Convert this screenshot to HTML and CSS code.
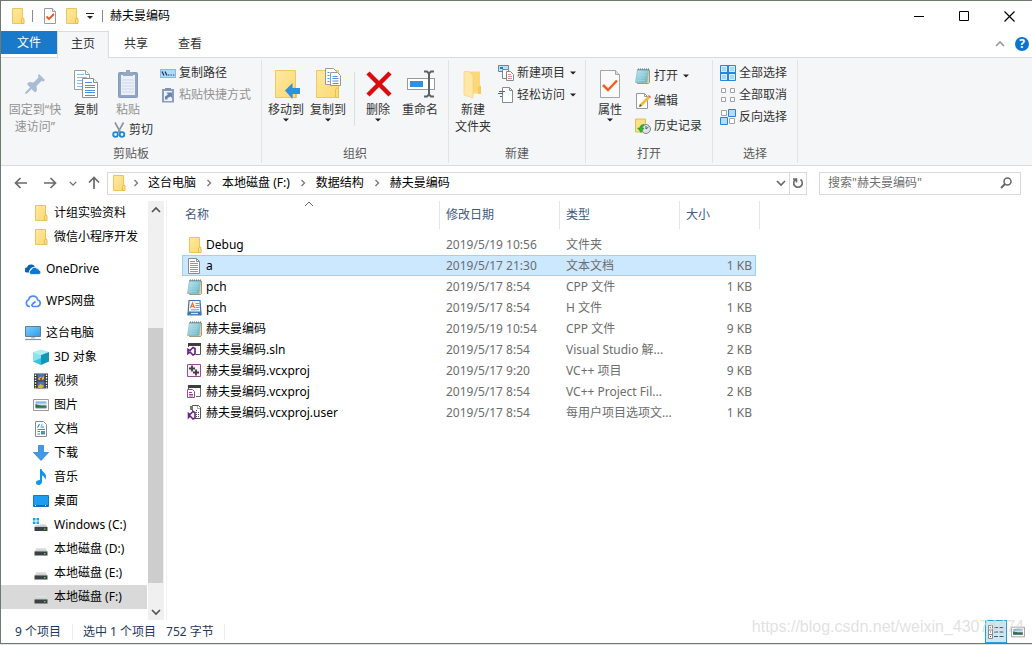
FILE: index.html
```html
<!DOCTYPE html>
<html lang="zh-CN">
<head>
<meta charset="utf-8">
<title>赫夫曼编码</title>
<link rel="stylesheet" href="styles.css">
</head>
<body>
<svg class="sprite" width="0" height="0" aria-hidden="true">
  <defs>
    <linearGradient id="gFolder" x1="0" y1="0" x2="1" y2="1"><stop offset="0" stop-color="#ffe9a2"/><stop offset="1" stop-color="#fbd96f"/></linearGradient>
    <linearGradient id="gNote" x1="0" y1="0" x2="1" y2="1"><stop offset="0" stop-color="#c5e9f0"/><stop offset="1" stop-color="#5fb0c4"/></linearGradient>
    <linearGradient id="gScreen" x1="0" y1="0" x2="1" y2="1"><stop offset="0" stop-color="#7fd0ff"/><stop offset="1" stop-color="#2a9be8"/></linearGradient>
    <linearGradient id="gDrive" x1="0" y1="0" x2="0" y2="1"><stop offset="0" stop-color="#e6e7e9"/><stop offset="1" stop-color="#bfc1c4"/></linearGradient>
    <linearGradient id="gSky" x1="0" y1="0" x2="0" y2="1"><stop offset="0" stop-color="#5f9fd8"/><stop offset=".5" stop-color="#e4f1f8"/><stop offset=".6" stop-color="#54785d"/><stop offset="1" stop-color="#6f93a8"/></linearGradient>
  </defs>
  <symbol id="folder" viewBox="0 0 16 16"><path d="M2.500.5h10v10l1 1v4h-11z" fill="url(#gFolder)" stroke="#ecc755"/><path d="M11.500 15.500v-4l1-1.500h1l.5 1.500v4z" fill="#fde08a" stroke="#e6bd43"/></symbol>
  <symbol id="check-doc" viewBox="0 0 16 16"><path d="M2.500.5h8l3 3v12h-11z" fill="#fff" stroke="#9a9a9a"/><path d="M10.500.5v3h3" fill="#eee" stroke="#9a9a9a"/><path d="M4.500 8.500l2.500 2.500 5-5" fill="none" stroke="#f0541e" stroke-width="1.800"/></symbol>
  <symbol id="check-big" viewBox="0 0 24 30"><path d="M2.500 1.500h15l4 4v23h-19z" fill="#fafafa" stroke="#a5a5a5"/><path d="M17.500 1.500v4h4" fill="#ddd" stroke="#a5a5a5"/><path d="M5 16l5 5 9-9.500" fill="none" stroke="#f4601f" stroke-width="2.500"/></symbol>
  <symbol id="pin" viewBox="0 0 24 24"><path d="M16 2l6 6-1.500 1.500-2-.5-5 5 .5 4.500-2 2-3.500-3.500-4.500 4.500-2 .5.5-2 4.500-4.500L4 12l2-2 4.500.5 5-5-.5-2z" fill="#a9bcd3"/></symbol>
  <symbol id="copy" viewBox="0 0 26 30"><g fill="#fff" stroke="#9c9c9c"><path d="M1.500 1.500h11l4 4v15h-15z"/><path d="M12.500 1.500v4h4"/></g><path d="M4 5.500h7M4 8.500h10M4 11.500h10M4 14.500h10M4 17.500h10" stroke="#8ab8ec"/><g fill="#fff" stroke="#8f8f8f"><path d="M9.500 9.500h11l4 4v15h-15z"/><path d="M20.500 9.500v4h4"/></g><path d="M12 13.500h7M12 16.500h10M12 18.500h10M12 21.500h10M12 23.500h10M12 26.500h10" stroke="#4c93e8"/></symbol>
  <symbol id="paste" viewBox="0 0 22 30"><rect x="1.500" y="3.500" width="19" height="25" rx="1" fill="#8fa4c8" stroke="#8499bd"/><path d="M4 6h14v20H4z" fill="#eaf0f8"/><path d="M5 11h12M5 14h12M5 17h12M5 20h12M5 23h12" stroke="#cbd7e7"/><path d="M6 7V3h3V1h4v2h3v4z" fill="#9aa8bf"/></symbol>
  <symbol id="scissors" viewBox="0 0 14 16"><path d="M3 .5l5.500 10M11.500.5L6 10.500" stroke="#8994a0" stroke-width="1.600" fill="none"/><g fill="none" stroke="#1d87cf" stroke-width="1.800"><circle cx="3.500" cy="12.500" r="2.300"/><circle cx="10" cy="12.500" r="2.300"/></g></symbol>
  <symbol id="path" viewBox="0 0 16 16"><rect x=".5" y="4.500" width="15" height="8" fill="#aadcf7" stroke="#8cb9dc"/><path d="M2 6.500l2 4M5 6.500l2 4" stroke="#1d3a5c" stroke-width="1.300"/><path d="M8 10h1.300M10.500 10h1.300M13 10h1.300" stroke="#1d3a5c"/></symbol>
  <symbol id="shortcut" viewBox="0 0 16 16"><path d="M2 2h12v13.500H2z" fill="#8a9dc0"/><path d="M4 4h8v10H4z" fill="#eef2f9"/><path d="M5 3.500V1h6v2.500z" fill="#8292ad"/><path d="M5 12.500V9.500l3-2-1.500-2H12V11l-1.500-1.500L7.500 11v1.500z" fill="#6a82b0"/></symbol>
  <symbol id="move-to" viewBox="0 0 28 32"><path d="M3.500 2.500h20v21l1 2v4h-21z" fill="url(#gFolder)" stroke="#efc95a"/><path d="M20.500 29.500v-8l1.500-2 1.500 2v8z" fill="#fcdc80" stroke="#e9c04b"/><path d="M13 22.500l7.500-7.500v5H28v6h-7.500v5z" fill="#2f8fe0"/></symbol>
  <symbol id="copy-to" viewBox="0 0 28 32"><path d="M2.500 2.500h22v27h-22z" fill="url(#gFolder)" stroke="#efc95a"/><path d="M21.500 29.500v-8l1.500-2 1.500 2v8z" fill="#fcdc80" stroke="#e9c04b"/><g fill="#fff" stroke="#999"><path d="M11.500.5h8l3 3v13h-11z"/><path d="M16.500 4.500h7l3 3v10h-10z"/></g><path d="M13.500 4.500h2M13.500 7.500h2M13.500 10.500h2M13.500 13.500h2M18.500 8.500h5M18.500 10.500h6M18.500 13h6M18.500 15.500h6" stroke="#4c93e8"/></symbol>
  <symbol id="delete" viewBox="0 0 28 28"><path d="M4 3l22 22M26 3L4 25" stroke="#d90b0f" stroke-width="4.500"/></symbol>
  <symbol id="rename" viewBox="0 0 30 30"><rect x="2.500" y="9.500" width="27" height="11" fill="#fff" stroke="#999"/><path d="M5 12h13v6H5z" fill="#2f8fe3"/><path d="M19 2.500h3l2 2 2-2h3M19 27.500h3l2-2 2 2h3M24 4v22" fill="none" stroke="#5c6368" stroke-width="2"/></symbol>
  <symbol id="new-folder" viewBox="0 0 24 30"><path d="M8 2.500h11v22H8z" fill="#fbd878"/><path d="M3 2.500h5l4 4V29l-9-3z" fill="#ffe7a6" stroke="#f2ce72" stroke-width=".6"/><path d="M17 25V18l3-1.500V25z" fill="#f6ca5b"/></symbol>
  <symbol id="new-item" viewBox="0 0 16 16"><path d="M.5.5h10v6H.5z" fill="#bde1f6" stroke="#5d8aaa"/><path d="M2 2h3v2H2z" fill="#287fba"/><path d="M4.500 4.500h6v9h-6z" fill="#fff" stroke="#888"/><path d="M8.500 6.500h4l3 3v6h-7z" fill="#fff" stroke="#888"/><path d="M10 9.500h3M10 11.500h4M10 13.500h4" stroke="#e88"/></symbol>
  <symbol id="easy" viewBox="0 0 16 16"><path d="M4.500.5h7l3 3v12h-10z" fill="#fff" stroke="#8a8a8a"/><path d="M11.500.5v3h3" fill="none" stroke="#8a8a8a"/><path d="M1 4.500h6M0 6.500h5M2 9.500h2" stroke="#1976c5" stroke-width="1.200"/></symbol>
  <symbol id="notepad" viewBox="0 0 16 16"><path d="M3.500 2h11v12.500l-1 1h-11z" fill="#e0d4b0" stroke="#a39b78"/><path d="M2.500 1.500h11L12 14.500H.5z" fill="url(#gNote)" stroke="#86b7c2" stroke-width=".7"/><path d="M3 5h8M2.500 7.500h8M2.500 10h8M2 12.500h8" stroke="#a5dce6" stroke-width=".6"/><path d="M3 2.500L3.500.5M5 2.500L5.500.5M7 2.500L7.500.5M9 2.500L9.500.5M11 2.500l.5-2M13 2.500l.5-2" stroke="#55777f"/></symbol>
  <symbol id="edit" viewBox="0 0 16 16"><path d="M1.500.5h8l3 3v12h-11z" fill="#fff" stroke="#999"/><path d="M9.500.5v3h3" fill="none" stroke="#999"/><path d="M4 14l1-3 8-8 2 2-8 8z" fill="#f2bd36"/><path d="M13 3l1-1 2 2-1 1z" fill="#dd5f50"/><path d="M4 14l1-3 2 2z" fill="#5b564d"/></symbol>
  <symbol id="history" viewBox="0 0 16 16"><path d="M.5 1h10v13H.5z" fill="#fbe088" stroke="#dec04e"/><circle cx="11" cy="11" r="4.500" fill="#dfe3e7" stroke="#7d858c"/><path d="M11 8v3l2.500-2" fill="none" stroke="#555"/><path d="M9 6.500C6 6.500 5 8 4.800 10H2.500L6 14.500 9 10H7c.2-1.500 1-2 2-2z" fill="#35b235" stroke="#1d8a22" stroke-width=".5"/></symbol>
  <symbol id="sel-all" viewBox="0 0 16 16"><path d="M.5.500h15v15H.5z" fill="#a9d7f9" stroke="#2088dc"/><path d="M8 0v16M0 8h16" stroke="#2088dc" stroke-width="2"/><path d="M1.500 1.500h5v5h-5zM9.500 1.500h5v5h-5zM1.500 9.500h5v5h-5zM9.500 9.500h5v5h-5z" fill="none" stroke="#d8eefd"/></symbol>
  <symbol id="sel-none" viewBox="0 0 16 16"><path d="M1.500 1.500h4v4h-4zM10.500 1.500h4v4h-4zM1.500 10.500h4v4h-4zM10.500 10.500h4v4h-4z" fill="#fff" stroke="#a2a2a2"/></symbol>
  <symbol id="sel-inv" viewBox="0 0 16 16"><path d="M1.500 1.500h5v5h-5zM9.500 9.500h5v5h-5z" fill="#fff" stroke="#a2a2a2"/><path d="M8.500.5h7v7h-7zM.5 8.500h7v7h-7z" fill="#b4dcfa" stroke="#2088dc"/></symbol>
  <symbol id="chev-r" viewBox="0 0 8 8"><path d="M2.500 1l3 3-3 3" fill="none" stroke="#777" stroke-width="1.300"/></symbol>
  <symbol id="chev-d" viewBox="0 0 10 8"><path d="M1 2l4 4 4-4" fill="none" stroke="currentColor" stroke-width="1.600"/></symbol>
  <symbol id="chev-u" viewBox="0 0 10 8"><path d="M1 6l4-4 4 4" fill="none" stroke="currentColor" stroke-width="1.600"/></symbol>
  <symbol id="chev-thin" viewBox="0 0 10 8"><path d="M1 6l4-4 4 4" fill="none" stroke="currentColor"/></symbol>
  <symbol id="caret" viewBox="0 0 6 4"><path d="M0 .5h6L3 3.500z" fill="#222"/></symbol>
  <symbol id="arrow-l" viewBox="0 0 14 14"><path d="M13 7H2M6.500 2L1.500 7l5 5" fill="none" stroke="currentColor" stroke-width="1.700"/></symbol>
  <symbol id="arrow-r" viewBox="0 0 14 14"><path d="M1 7h11M7.500 2l5 5-5 5" fill="none" stroke="currentColor" stroke-width="1.700"/></symbol>
  <symbol id="arrow-u" viewBox="0 0 14 14"><path d="M7 13V2M2 6.500l5-5 5 5" fill="none" stroke="currentColor" stroke-width="1.700"/></symbol>
  <symbol id="refresh" viewBox="0 0 12 12"><path d="M8.500 2.500a4.300 4.300 0 1 1-5 0M4.500 5.500V2H1" fill="none" stroke="#6a6a6a" stroke-width="1.600"/></symbol>
  <symbol id="search" viewBox="0 0 12 12"><circle cx="7.500" cy="4.500" r="3.500" fill="none" stroke="#666" stroke-width="1.500"/><path d="M5 7L1 11" stroke="#666" stroke-width="2"/></symbol>
  <symbol id="onedrive" viewBox="0 0 16 16"><path d="M1.800 11.500A2.500 2.500 0 0 1 2 6.500 4 4 0 0 1 6 3.500a4.500 4.500 0 0 1 4 2L6 7 4 10v1.500z" fill="#0a64b4"/><path d="M6.500 13.500a2.300 2.300 0 0 1-.5-4.500 3.500 3.500 0 0 1 6-1.500 3 3 0 0 1 2.500 2 2.100 2.100 0 0 1-.5 4z" fill="#0a78d4" stroke="#fff" stroke-width=".7"/></symbol>
  <symbol id="wps" viewBox="0 0 16 16"><path d="M5 13.500h-.5A3.500 3.500 0 0 1 3.500 6.800 4.700 4.700 0 0 1 12.700 7 3.300 3.300 0 0 1 12 13.500H8.500c-1.500 0-2-1.500-1-2.500L10.500 8.500" fill="none" stroke="#4b8df5" stroke-width="1.700"/></symbol>
  <symbol id="pc" viewBox="0 0 16 16"><path d="M.5 1.500h15v10H.5z" fill="url(#gScreen)" stroke="#5f7f94"/><path d="M6 12h4v1.500H6z" fill="#b8c8d2"/><path d="M0 14.500h16" stroke="#7f98a8" stroke-width="1.200"/></symbol>
  <symbol id="cube" viewBox="0 0 16 16"><path d="M0 3l8-2.500L16 3l-8 3z" fill="#b0edf4"/><path d="M0 3l8 3v10L0 12.500z" fill="#8be1ec"/><path d="M16 3L8 6v10l8-3.500z" fill="#1098ba"/><path d="M0 12.500l8-3.500v7z" fill="#3fc2d9"/></symbol>
  <symbol id="film" viewBox="0 0 16 16"><path d="M1 .5h14v15H1z" fill="#383838"/><path d="M4.500 1h7v6.500h-7zM4.500 8.500h7V15h-7z" fill="#4b74bd"/><path d="M5 5.500l2.500-2 1 1.500 2.500-2v3l-2 1H6zM5 13l2.500-2 3.500 2-2 2H5z" fill="#e4b42d"/><path d="M7 5h2v2H7z" fill="#c83a20"/><path d="M2.500 1.500v14M13.500 1.500v14" stroke="#fff" stroke-width="1.400" stroke-dasharray="1.400 1.200"/></symbol>
  <symbol id="picture" viewBox="0 0 16 16"><path d="M.5 2.500h15v11H.5z" fill="#fff" stroke="#999"/><path d="M2.500 4.500h11v7h-11z" fill="url(#gSky)"/><path d="M2.500 7l3 1 3 1 5 .5v1h-11z" fill="#3b6b56"/></symbol>
  <symbol id="docs" viewBox="0 0 16 16"><path d="M2.500.5h8l3 3v12h-11z" fill="#fff" stroke="#8a8a8a"/><path d="M4.500 6.500l2-3.500M8 4h1.500M7.500 6H11M4.500 8.500H12M4.500 10.500H7M4.500 13H7" stroke="#258ed2" stroke-width="1.200"/><path d="M8 10h4v3.500H8z" fill="#5790ae"/></symbol>
  <symbol id="download" viewBox="0 0 16 16"><path d="M5.500.5h5v7h5L8 15.500.5 7.500h5z" fill="#3f9bea" stroke="#2478c8" stroke-width=".7"/></symbol>
  <symbol id="music" viewBox="0 0 16 16"><path d="M7 0h1.500c.5 3 4.500 4 4.500 7.500 0 1.500-.5 2.500-1 3.500 0-3-1.500-4-3-4.500v6.500c0 1.500-1.500 3-3.500 3S3 15 3 13.500 4.500 11 7 11z" fill="#0f94e8"/></symbol>
  <symbol id="desktop" viewBox="0 0 16 16"><path d="M.5 2.500h15v11H.5z" fill="#1c9df2" stroke="#1678c4"/><path d="M1 12h14v1.500H1z" fill="#116bb0"/><path d="M2 12.500h2M12 12.500h2" stroke="#fff" stroke-dasharray="1 1"/></symbol>
  <symbol id="drive" viewBox="0 0 16 16"><path d="M3.500 7h9l2 4h-13z" fill="url(#gDrive)"/><path d="M1.500 10.500h13v4h-13z" fill="#3c4144"/><path d="M11 12h1.500v1.300H11z" fill="#3fe04d"/></symbol>
  <symbol id="win-drive" viewBox="0 0 16 16"><path d="M0 1h2.500v2.500H0zM3.500 1H6v2.500H3.500zM0 4.500h2.500V7H0zM3.500 4.500H6V7H3.500z" fill="#12a8e8"/><path d="M6.500 7h6l2 3h-13l1-2h4z" fill="url(#gDrive)"/><path d="M1.500 10h13v4h-13z" fill="#3c4144"/><path d="M11 11.500h1.500v1.300H11z" fill="#3fe04d"/></symbol>
  <symbol id="txt" viewBox="0 0 16 16"><path d="M1.500.5h8l3 3v12h-11z" fill="#fff" stroke="#8b8b8b"/><path d="M9.500.5v3h3" fill="none" stroke="#8b8b8b"/><path d="M3 3.500h5M3 5.500h8M3 7.500h8M3 9.500h8M3 11.500h8M3 13.500h8" stroke="#999"/></symbol>
  <symbol id="hfile" viewBox="0 0 16 16"><path d="M2 .5h11l1 14H1z" fill="#f4f8fd" stroke="#3f74ac" stroke-width="1.200"/><path d="M1 11.500h13l.5 4H.5z" fill="#3f79b6"/><path d="M4 13.500h7" stroke="#d8e8f5" stroke-width="1.200"/><path d="M3.500 8L5.500 3l2 5M4 6.500h3" fill="none" stroke="#e7702a" stroke-width="1.200"/><path d="M8.500 3.500h4M8.500 5.500h4M8.500 7.500h4M4 9.800h8" stroke="#6c9fd0"/></symbol>
  <symbol id="sln" viewBox="0 0 16 16"><path d="M1.500 3.500h12v9h-12z" fill="#fff" stroke="#555"/><path d="M1 1h13v3H1z" fill="#3e3e3e"/><path d="M0 5h9v9H0z" fill="#fff"/><path d="M1 7.500v4l2-1.500 3 3 2-1V6.500l-2-1-3 3z" fill="none" stroke="#6b2585" stroke-width="1.700"/></symbol>
  <symbol id="proj" viewBox="0 0 16 16"><path d="M.5 1.500h13v12H.5z" fill="#f4f0f4" stroke="#9a4b98"/><path d="M2 5.500h6M5 2.500v6M6 9.500h6M9 6.500v6" stroke="#3d3d3d" stroke-width="1.800"/></symbol>
  <symbol id="filters" viewBox="0 0 16 16"><path d="M1.500 3.500h12v9h-12z" fill="#fff" stroke="#666"/><path d="M1 1h13v3H1z" fill="#3e3e3e"/><path d="M0 5h9v10H0z" fill="#fff"/><path d="M.5 5.500h5l2 2v6h-7z" fill="#fff" stroke="#9a4b98"/><path d="M2 8.500h3M2 10.500h4M2 12h4" stroke="#9a4b98"/></symbol>
  <symbol id="user" viewBox="0 0 16 16"><path d="M5.500.5h6l2 2v11h-8z" fill="#fff" stroke="#555"/><path d="M10.500.5v3h3M9.500 5v7M11.500 7v5" fill="none" stroke="#555" stroke-dasharray="1 1"/><path d="M3 1h3v4H3z" fill="#777"/><path d="M1 6h7v9H1z" fill="#fff"/><path d="M1.500 8.500v4L3 11l3 3 2-1V7.500l-2-1-3 3z" fill="none" stroke="#6b2585" stroke-width="1.600"/></symbol>
</svg>

<main class="window">
  <header class="titlebar">
    <svg class="ico"><use href="#folder"/></svg>
    <span class="tick-line"></span>
    <button class="quick" aria-label="属性"><svg class="ico"><use href="#check-doc"/></svg></button>
    <button class="quick" aria-label="新建文件夹"><svg class="ico"><use href="#folder"/></svg></button>
    <button class="quick narrow" aria-label="自定义快速访问工具栏"><svg width="8" height="8" viewBox="0 0 8 8"><path d="M0 1.500h8" stroke="#222"/><path d="M1 4h6L4 7z" fill="#222"/></svg></button>
    <span class="tick-line"></span>
    <h1 class="title">赫夫曼编码</h1>
    <div class="controls">
      <button aria-label="最小化"><svg width="11" height="11"><path d="M0 5.500h10" stroke="#000"/></svg></button>
      <button aria-label="最大化"><svg width="11" height="11"><path d="M.5.500h9v9h-9z" fill="none" stroke="#000"/></svg></button>
      <button aria-label="关闭"><svg width="11" height="11"><path d="M.5.500l10 10M10.500.5l-10 10" stroke="#000" stroke-width="1.200"/></svg></button>
    </div>
  </header>

  <nav class="tabs">
    <button class="tab file">文件</button>
    <button class="tab active">主页</button>
    <button class="tab">共享</button>
    <button class="tab">查看</button>
    <div class="tab-tools">
      <button aria-label="最小化功能区"><svg class="collapse" width="10" height="8"><use href="#chev-u"/></svg></button>
      <button class="help" aria-label="帮助">?</button>
    </div>
  </nav>

  <section class="ribbon">
    <div class="group clipboard">
      <div class="tools">
        <button class="big pin off"><span class="pic"><svg width="24" height="24"><use href="#pin"/></svg></span>固定到“快<br>速访问”</button>
        <button class="big"><span class="pic"><svg width="26" height="30"><use href="#copy"/></svg></span>复制</button>
        <div class="paste-col">
          <button class="big off"><span class="pic"><svg width="22" height="30"><use href="#paste"/></svg></span>粘贴</button>
          <button class="small cut"><svg width="14" height="16"><use href="#scissors"/></svg>剪切</button>
        </div>
        <div class="stack">
          <button class="small"><svg class="ico"><use href="#path"/></svg>复制路径</button>
          <button class="small off"><svg class="ico"><use href="#shortcut"/></svg>粘贴快捷方式</button>
        </div>
      </div>
      <div class="group-name">剪贴板</div>
    </div>
    <div class="group organize">
      <div class="tools">
        <button class="big"><span class="pic"><svg width="28" height="32"><use href="#move-to"/></svg></span>移动到<svg class="drop"><use href="#caret"/></svg></button>
        <button class="big"><span class="pic"><svg width="28" height="32"><use href="#copy-to"/></svg></span>复制到<svg class="drop"><use href="#caret"/></svg></button>
        <span class="inner-line"></span>
        <button class="big"><span class="pic"><svg width="28" height="28"><use href="#delete"/></svg></span>删除<svg class="drop"><use href="#caret"/></svg></button>
        <button class="big"><span class="pic"><svg width="30" height="30"><use href="#rename"/></svg></span>重命名</button>
      </div>
      <div class="group-name">组织</div>
    </div>
    <div class="group create">
      <div class="tools">
        <button class="big"><span class="pic"><svg width="24" height="30"><use href="#new-folder"/></svg></span>新建<br>文件夹</button>
        <div class="stack">
          <button class="small"><svg class="ico"><use href="#new-item"/></svg>新建项目<svg class="drop"><use href="#caret"/></svg></button>
          <button class="small"><svg class="ico"><use href="#easy"/></svg>轻松访问<svg class="drop"><use href="#caret"/></svg></button>
        </div>
      </div>
      <div class="group-name">新建</div>
    </div>
    <div class="group open">
      <div class="tools">
        <button class="big"><span class="pic"><svg width="24" height="30"><use href="#check-big"/></svg></span>属性<svg class="drop"><use href="#caret"/></svg></button>
        <div class="stack loose">
          <button class="small"><svg class="ico"><use href="#notepad"/></svg>打开<svg class="drop"><use href="#caret"/></svg></button>
          <button class="small"><svg class="ico"><use href="#edit"/></svg>编辑</button>
          <button class="small"><svg class="ico"><use href="#history"/></svg>历史记录</button>
        </div>
      </div>
      <div class="group-name">打开</div>
    </div>
    <div class="group select">
      <div class="tools">
        <div class="stack">
          <button class="small"><svg class="ico"><use href="#sel-all"/></svg>全部选择</button>
          <button class="small"><svg class="ico"><use href="#sel-none"/></svg>全部取消</button>
          <button class="small"><svg class="ico"><use href="#sel-inv"/></svg>反向选择</button>
        </div>
      </div>
      <div class="group-name">选择</div>
    </div>
  </section>

  <section class="location">
    <div class="history">
      <button class="arrow" aria-label="后退"><svg width="14" height="14"><use href="#arrow-l"/></svg></button>
      <button class="arrow" aria-label="前进"><svg width="14" height="14"><use href="#arrow-r"/></svg></button>
      <button class="recent" aria-label="最近浏览的位置"><svg width="8" height="7"><use href="#chev-d"/></svg></button>
      <button class="up" aria-label="上移"><svg width="14" height="14"><use href="#arrow-u"/></svg></button>
    </div>
    <div class="address">
      <svg class="ico"><use href="#folder"/></svg>
      <svg class="sep"><use href="#chev-r"/></svg><a href="#">这台电脑</a>
      <svg class="sep"><use href="#chev-r"/></svg><a href="#">本地磁盘 (F:)</a>
      <svg class="sep"><use href="#chev-r"/></svg><a href="#">数据结构</a>
      <svg class="sep"><use href="#chev-r"/></svg><a href="#">赫夫曼编码</a>
      <button class="expand" aria-label="以前的位置"><svg width="10" height="8"><use href="#chev-d"/></svg></button>
      <button class="reload" aria-label="刷新"><svg width="12" height="12"><use href="#refresh"/></svg></button>
    </div>
    <div class="search">
      <input type="text" aria-label="搜索" placeholder='搜索"赫夫曼编码"'>
      <svg width="12" height="12"><use href="#search"/></svg>
    </div>
  </section>

  <section class="content">
    <nav class="tree">
      <a class="node" href="#"><svg class="ico"><use href="#folder"/></svg>计组实验资料</a>
      <a class="node" href="#"><svg class="ico"><use href="#folder"/></svg>微信小程序开发</a>
      <a class="node root" href="#"><svg class="ico"><use href="#onedrive"/></svg>OneDrive</a>
      <a class="node root" href="#"><svg class="ico"><use href="#wps"/></svg>WPS网盘</a>
      <a class="node root" href="#"><svg class="ico"><use href="#pc"/></svg>这台电脑</a>
      <a class="node" href="#"><svg class="ico"><use href="#cube"/></svg>3D 对象</a>
      <a class="node" href="#"><svg class="ico"><use href="#film"/></svg>视频</a>
      <a class="node" href="#"><svg class="ico"><use href="#picture"/></svg>图片</a>
      <a class="node" href="#"><svg class="ico"><use href="#docs"/></svg>文档</a>
      <a class="node" href="#"><svg class="ico"><use href="#download"/></svg>下载</a>
      <a class="node" href="#"><svg class="ico"><use href="#music"/></svg>音乐</a>
      <a class="node" href="#"><svg class="ico"><use href="#desktop"/></svg>桌面</a>
      <a class="node" href="#"><svg class="ico"><use href="#win-drive"/></svg>Windows (C:)</a>
      <a class="node" href="#"><svg class="ico"><use href="#drive"/></svg>本地磁盘 (D:)</a>
      <a class="node" href="#"><svg class="ico"><use href="#drive"/></svg>本地磁盘 (E:)</a>
      <a class="node current" href="#"><svg class="ico"><use href="#drive"/></svg>本地磁盘 (F:)</a>
    </nav>
    <div class="scrollbar">
      <button aria-label="向上滚动"><svg width="10" height="8"><use href="#chev-u"/></svg></button>
      <div class="track"><div class="thumb"></div></div>
      <button aria-label="向下滚动"><svg width="10" height="8"><use href="#chev-d"/></svg></button>
    </div>
    <div class="files">
      <table>
        <colgroup><col class="c-name"><col class="c-mid"><col class="c-mid"><col class="c-size"></colgroup>
        <thead>
          <tr>
            <th class="name"><div class="head">名称<svg class="sort"><use href="#chev-thin"/></svg></div></th>
            <th><div class="head">修改日期</div></th>
            <th><div class="head">类型</div></th>
            <th><div class="head last">大小</div></th>
          </tr>
        </thead>
        <tbody>
          <tr><td class="name"><span class="file-name"><svg class="ico"><use href="#folder"/></svg>Debug</span></td><td>2019/5/19 10:56</td><td>文件夹</td><td class="size"></td></tr>
          <tr class="selected"><td class="name"><span class="file-name"><svg class="ico"><use href="#txt"/></svg>a</span></td><td>2019/5/17 21:30</td><td>文本文档</td><td class="size">1 KB</td></tr>
          <tr><td class="name"><span class="file-name"><svg class="ico"><use href="#notepad"/></svg>pch</span></td><td>2019/5/17 8:54</td><td>CPP 文件</td><td class="size">1 KB</td></tr>
          <tr><td class="name"><span class="file-name"><svg class="ico"><use href="#hfile"/></svg>pch</span></td><td>2019/5/17 8:54</td><td>H 文件</td><td class="size">1 KB</td></tr>
          <tr><td class="name"><span class="file-name"><svg class="ico"><use href="#notepad"/></svg>赫夫曼编码</span></td><td>2019/5/19 10:54</td><td>CPP 文件</td><td class="size">9 KB</td></tr>
          <tr><td class="name"><span class="file-name"><svg class="ico"><use href="#sln"/></svg>赫夫曼编码.sln</span></td><td>2019/5/17 8:54</td><td>Visual Studio 解...</td><td class="size">2 KB</td></tr>
          <tr><td class="name"><span class="file-name"><svg class="ico"><use href="#proj"/></svg>赫夫曼编码.vcxproj</span></td><td>2019/5/17 9:20</td><td>VC++ 项目</td><td class="size">9 KB</td></tr>
          <tr><td class="name"><span class="file-name"><svg class="ico"><use href="#filters"/></svg>赫夫曼编码.vcxproj</span></td><td>2019/5/17 8:54</td><td>VC++ Project Fil...</td><td class="size">2 KB</td></tr>
          <tr><td class="name"><span class="file-name"><svg class="ico"><use href="#user"/></svg>赫夫曼编码.vcxproj.user</span></td><td>2019/5/17 8:54</td><td>每用户项目选项文...</td><td class="size">1 KB</td></tr>
        </tbody>
      </table>
    </div>
  </section>

  <footer class="status">
    <span class="count">9 个项目</span>
    <span class="chosen">选中 1 个项目</span>
    <span class="bytes">752 字节</span>
    <div class="views">
      <button class="view on" aria-label="详细信息"><svg width="16" height="16" viewBox="0 0 16 16"><path d="M.5 1.500h4v13h-4zM.5 6h4M.5 10.500h4" fill="#fff" stroke="#8a8a8a"/><path d="M2 3.500h1M2 8h1M2 12.500h1" stroke="#c22"/><path d="M6 3.500h4M11.500 3.500h4M6 8h4M11.500 8h4M6 12.500h4M11.500 12.500h4" stroke="#555"/></svg></button>
      <button class="view" aria-label="大缩略图"><svg width="14" height="14" viewBox="0 0 16 16"><use href="#picture"/></svg></button>
    </div>
    <div class="watermark">https://blog.csdn.net/weixin_43074474</div>
  </footer>
</main>
</body>
</html>
```
FILE: styles.css
```css
* { box-sizing: border-box; }
body {
  margin: 0;
  min-height: 100vh;
  padding-bottom: 1px;
  display: flex;
  background: #dfe3e4;
  color: #000;
  font: 12px/16px "Noto Sans", "Noto Sans CJK SC", sans-serif;
}
svg { flex: none; display: block; }
.sprite { position: absolute; }
.ico { width: 16px; height: 16px; }
button { margin: 0; padding: 0; border: 0; background: none; color: inherit; font: inherit; display: flex; align-items: center; justify-content: center; }
a { color: inherit; text-decoration: none; }

.window {
  flex: 1;
  min-width: 0;
  display: flex;
  flex-direction: column;
  background: #fff;
  border: 1px solid #6d7a6e;
  border-right: 0;
}

.titlebar { display: flex; align-items: center; height: 30px; padding-left: 9px; }
.tick-line { width: 1px; height: 12px; background: #8c8c8c; }
.titlebar > .ico { margin-right: 6px; }
.quick { width: 22px; margin-left: 6px; }
.quick + .quick { margin-left: 0; }
.quick.narrow { width: 14px; margin-right: 5px; }
.title { margin: 0 0 0 7px; font-size: 12px; font-weight: 400; }
.controls { display: flex; margin-left: auto; }
.controls button { width: 45px; height: 29px; }

.tabs { display: flex; height: 27px; border-bottom: 1px solid #dadbdc; }
.tab { width: 54px; height: 26px; color: #333; }
.tab.file { width: 56px; height: 23px; background: #1979ca; color: #fff; }
.tab.active { width: 52px; height: 27px; padding-bottom: 2px; background: #f5f6f7; border: 1px solid #dadbdc; border-bottom: 0; }
.tab-tools { display: flex; align-items: center; gap: 10px; margin-left: auto; padding-right: 3px; }
.collapse { color: #999; }
.help { width: 14px; height: 14px; border-radius: 50%; background: #0b74cf; color: #fff; font-weight: 700; }

.ribbon { display: flex; height: 108px; padding-top: 2px; background: #f5f6f7; border-bottom: 1px solid #dadbdc; color: #333; }
.group { height: 103px; border-right: 1px solid #e2e3e4; display: flex; flex-direction: column; }
.tools { flex: 1; display: flex; padding-top: 2px; }
.group-name { height: 17px; text-align: center; color: #5a5a5a; }
.clipboard { width: 261px; }
.clipboard .tools { padding-left: 4px; }
.organize { width: 187px; }
.organize .tools { padding-left: 3px; }
.create { width: 137px; }
.create .tools { padding-left: 0; }
.open { width: 127px; }
.open .tools { padding-left: 2px; }
.select { width: 85px; }
.select .tools { padding-left: 7px; }
.big { width: 42px; padding-top: 5px; flex-direction: column; justify-content: flex-start; line-height: 17px; }
.big.pin { width: 60px; }
.pic { height: 34px; display: flex; align-items: center; }
.drop { width: 6px; height: 4px; }
.off { color: #929292; }
.stack { display: flex; flex-direction: column; }
.clipboard .stack { margin-left: 7px; }
.small { justify-content: flex-start; gap: 3px; height: 22px; line-height: 16px; white-space: nowrap; }
.small .drop { margin-left: 2px; }
.stack.loose { padding-top: 1px; }
.stack.loose .small { height: 25px; }
.create .big { width: 48px; }
.create .stack { margin-left: 1px; }
.open .big { width: 44px; margin-right: 3px; }
.small.cut { height: 20px; margin: 2px 0 0 5px; }
.inner-line { width: 1px; height: 54px; margin: 10px 2px 0 5px; background: #dcdddf; }

.location { display: flex; align-items: center; height: 34px; padding-right: 11px; }
.history { display: flex; align-items: center; width: 106px; color: #6a6a6a; padding-left: 5px; }
.arrow { width: 29px; }
.recent { width: 18px; }
.up { width: 24px; }
.address { flex: 1; min-width: 0; display: flex; align-items: center; height: 23px; border: 1px solid #d9d9d9; padding-left: 3px; }
.sep { width: 8px; height: 8px; margin: 0 9px; }
.address .ico + .sep { margin: 0 8px 0 5px; }
.expand { width: 16px; margin-left: auto; color: #666; }
.reload { width: 17px; height: 21px; border-left: 1px solid #d9d9d9; }
.search { display: flex; align-items: center; width: 202px; height: 23px; margin-left: 12px; padding: 0 8px; border: 1px solid #d9d9d9; }
.search input { flex: 1; min-width: 0; padding: 0; border: 0; outline: 0; background: none; font: inherit; }
.search input::placeholder { color: #707070; opacity: 1; }

.content { flex: 1; display: flex; }
.tree { width: 146px; padding-top: 1px; }
.node { display: flex; align-items: center; gap: 5px; height: 24px; padding-left: 32px; white-space: nowrap; }
.node.root { margin-top: 8px; padding-left: 24px; }
.node.current { background: #d9d9d9; }
.scrollbar { width: 16px; margin: 1px 2px 0 1px; display: flex; flex-direction: column; background: #f0f0f0; color: #505050; }
.scrollbar button { height: 17px; width: 16px; }
.track { flex: 1; display: flex; flex-direction: column; justify-content: flex-end; padding-bottom: 20px; }
.thumb { height: 70%; width: 15px; background: #cdcdcd; }
.files { flex: 1; padding: 1px 0 0 15px; border-left: 1px solid #f2f2f2; }
table { width: 574px; table-layout: fixed; border-collapse: separate; border-spacing: 0; }
.c-name { width: 258px; }
.c-mid { width: 120px; }
.c-size { width: 76px; }
th { padding: 0 0 5px; font-weight: 400; text-align: left; color: #44597c; }
.head { position: relative; height: 28px; padding: 6px 0 0 6px; border-right: 1px solid #e5e5e5; }
.name .head { padding-left: 3px; }
.head.last { width: 80px; }
.sort { position: absolute; left: 122px; top: -1px; width: 10px; height: 8px; color: #666; }
td { height: 21px; padding: 0 0 0 6px; white-space: nowrap; color: #6d6d6d; border: 1px solid transparent; border-width: 1px 0; line-height: 16px; }
td.name { padding-left: 5px; color: #000; }
td.size { padding: 0 4px; text-align: right; }
.file-name { display: flex; align-items: center; gap: 3px; }
.selected td { background: #cce8ff; border-color: #99d1ff; }
.selected td:first-child { border-left: 1px solid #99d1ff; padding-left: 4px; }
.selected td:last-child { border-right: 1px solid #99d1ff; padding-right: 3px; }

.status { position: relative; display: flex; align-items: center; height: 23px; padding-left: 14px; color: #1e395b; }
.count { padding-right: 11px; border-right: 1px solid #ececec; }
.chosen { padding: 0 10px; }
.bytes { padding-right: 10px; border-right: 1px solid #ececec; }
.views { display: flex; margin-left: auto; padding-right: 4px; }
.view { width: 21px; height: 23px; }
.view.on { width: 22px; background: #cbe8f6; border: 1px solid #26a0da; }
.watermark { position: absolute; right: 8px; bottom: 6px; font: 16px/20px "Liberation Sans", sans-serif; color: rgba(215, 215, 215, .75); pointer-events: none; }
```
